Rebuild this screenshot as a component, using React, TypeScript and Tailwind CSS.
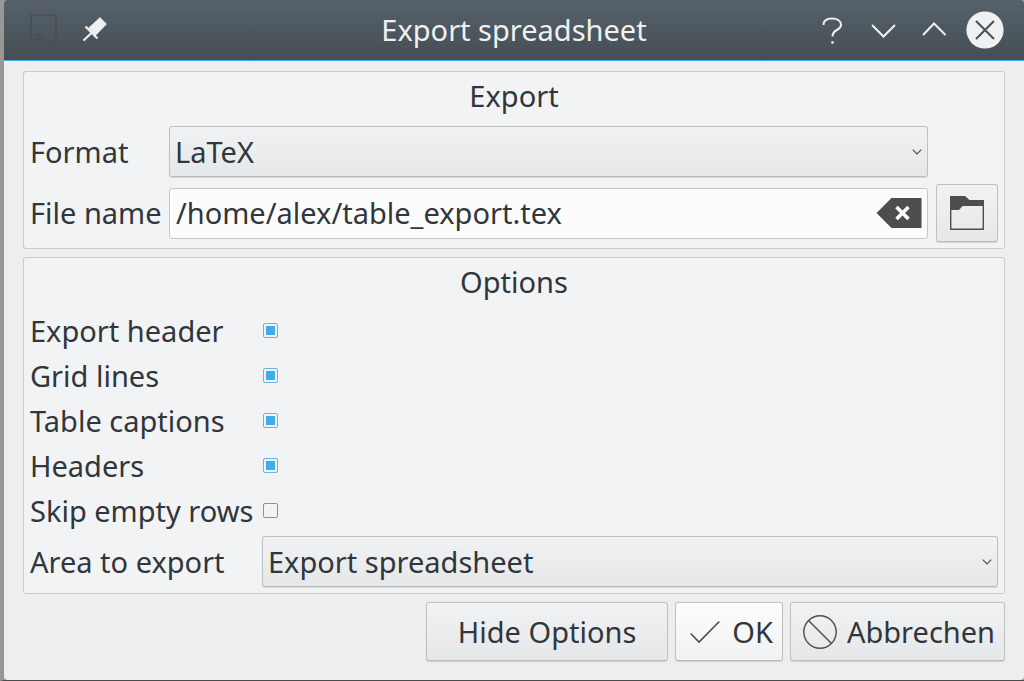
import type { ReactNode } from 'react'

const options = [
  { id: 'export-header', label: 'Export header', checked: true },
  { id: 'grid-lines', label: 'Grid lines', checked: true },
  { id: 'table-captions', label: 'Table captions', checked: true },
  { id: 'headers', label: 'Headers', checked: true },
  { id: 'skip-empty-rows', label: 'Skip empty rows', checked: false },
]

const raised = 'rounded-[3px] border border-[#bfc1c2] border-b-[#b8babb] shadow-[0_1px_1px_rgba(0,0,0,0.12)]'
const face = 'bg-linear-to-b from-[#f1f2f3] to-[#e6e7e8]'

function TitleButton({ label, children }: { label: string; children: ReactNode }) {
  return (
    <button type="button" aria-label={label} className="size-[38px]">
      <svg viewBox="0 0 38 38" className="size-[38px]" fill="none" stroke="#eff0f1" strokeWidth="2">
        {children}
      </svg>
    </button>
  )
}

function ComboBox({ id, values }: { id: string; values: string[] }) {
  return (
    <div className="relative">
      <select id={id} className={`h-[51px] w-full appearance-none pl-[5px] pr-8 ${raised} ${face}`}>
        {values.map((value) => (
          <option key={value}>{value}</option>
        ))}
      </select>
      <svg
        viewBox="0 0 10 6"
        className="pointer-events-none absolute right-1.5 top-[23px] h-1.5 w-2.5"
        fill="none"
        stroke="#4d4d4d"
        strokeWidth="1.2"
      >
        <path d="M0.7 0.7 L5 5 L9.3 0.7" />
      </svg>
    </div>
  )
}

function Panel({ title, children }: { title: string; children: ReactNode }) {
  return (
    <section className="rounded-[3px] border border-[#c9cbcc] bg-[#f2f3f5] px-1.5 pb-1.5">
      <h2 className="mb-0.5 flex h-12 items-center justify-center">{title}</h2>
      {children}
    </section>
  )
}

export default function App() {
  return (
    <div className="min-h-screen border-b border-l-4 border-b-[#4a4a4a] border-l-[#999795] bg-[#999795] font-['Noto_Sans',sans-serif] text-[29px] leading-10 text-[#31363b]">
      {/* Title bar */}
      <header className="grid h-[61px] grid-cols-[1fr_auto_1fr] items-center rounded-t-[4px] border-b border-[#3daee9] bg-linear-to-b from-[#56616a] to-[#454e54] px-5 text-[#eff0f1]">
        <div className="flex gap-[13px]">
          <TitleButton label="Window menu">
            <path d="M7 27V4H32V33.5H21" stroke="#4d4e50" strokeWidth="1.6" />
            <path d="M7 28H18M12.5 22.5L18 28L12.5 33.5" stroke="#4d4e50" />
          </TitleButton>
          <TitleButton label="Keep above">
            <path d="M25 6.5L31.5 13L20.5 24.5L13.5 17Z" fill="#eff0f1" stroke="#eff0f1" strokeWidth="0.6" />
            <path d="M10.5 15.5L22.5 27.5M17 21.5L8.5 29.5" strokeWidth="2.2" />
          </TitleButton>
        </div>
        <h1>Export spreadsheet</h1>
        <div className="flex justify-end gap-[13px]">
          <TitleButton label="Help">
            <path d="M10.5 14C10.5 9.5 14 7.5 19 7.5C24.5 7.5 28 10 28 14C28 20 19.5 17.5 19.5 25.5" />
            <path d="M18.3 31.5H20.7" strokeWidth="2.4" />
          </TitleButton>
          <TitleButton label="Minimize">
            <path d="M8 14L19.5 25.5L31 14" />
          </TitleButton>
          <TitleButton label="Maximize">
            <path d="M8 24L19 12.5L30.5 24" />
          </TitleButton>
          <TitleButton label="Close">
            <circle cx="19" cy="19" r="18.6" fill="#eff0f1" stroke="none" />
            <path d="M10 10L28 28M28 10L10 28" stroke="#475057" />
          </TitleButton>
        </div>
      </header>

      <main className="flex flex-col gap-2 rounded-b-[4px] bg-[#edeef0] px-[19px] pb-[19px] pt-2.5">
        <Panel title="Export">
          <div className="mt-1.5 grid grid-cols-[131px_1fr_62px] items-center gap-x-2 gap-y-[7px]">
            <label htmlFor="format">Format</label>
            <ComboBox id="format" values={['LaTeX', 'FITS', 'ASCII']} />
            <span />
            <label htmlFor="file-name" className="whitespace-nowrap">File name</label>
            <div className="flex h-[51px] items-center rounded-[3px] border border-[#c4c6c7] bg-[#fcfcfc] pl-1.5 pr-[5px]">
              <input
                id="file-name"
                type="text"
                defaultValue="/home/alex/table_export.tex"
                className="min-w-0 flex-1 outline-none"
              />
              <button type="button" aria-label="Clear file name">
                <svg viewBox="0 0 46 30" className="h-[30px] w-[46px]">
                  <path d="M0.5 15L15.5 0H45.5V30H15.5Z" fill="#4d4d4d" />
                  <path d="M20.5 9L32.5 21M32.5 9L20.5 21" stroke="#fcfcfc" strokeWidth="3.6" />
                </svg>
              </button>
            </div>
            <button
              type="button"
              aria-label="Choose file"
              className={`flex h-[58px] items-center justify-center ${raised} ${face}`}
            >
              <svg viewBox="0 0 34 34" className="size-[34px]">
                <path d="M0 0H15L19.5 4H34V10H12.5L9 14H0Z" fill="#4d4d4d" />
                <path d="M0.7 13V33.3H33.3V9" fill="none" stroke="#4d4d4d" strokeWidth="1.4" />
              </svg>
            </button>
          </div>
        </Panel>

        <Panel title="Options">
          {options.map((option) => (
            <div key={option.id} className="grid h-[45px] grid-cols-[225px_1fr] items-center gap-2">
              <label htmlFor={option.id} className="whitespace-nowrap">{option.label}</label>
              <input
                id={option.id}
                type="checkbox"
                defaultChecked={option.checked}
                className="size-[15px] appearance-none rounded-[2px] border border-[#8e9193] bg-clip-content p-[2px] checked:border-[#5cb8ea] checked:bg-[#3daee9]"
              />
            </div>
          ))}
          <div className="mt-[3px] grid grid-cols-[224px_1fr] items-center gap-2">
            <label htmlFor="area">Area to export</label>
            <ComboBox id="area" values={['Export spreadsheet', 'Export selection']} />
          </div>
        </Panel>

        {/* Dialog buttons */}
        <footer className="flex justify-end gap-[7px]">
          <button type="button" className={`h-[59px] px-[31px] ${raised} ${face}`}>
            Hide Options
          </button>
          <button
            type="button"
            className={`flex h-[59px] items-center gap-3 pl-3.5 pr-[9px] ${raised} bg-linear-to-b from-[#fcfcfc] to-[#f1f2f3]`}
          >
            <svg viewBox="0 0 30 24" className="h-6 w-[30px]" fill="none" stroke="#4d4d4d" strokeWidth="1.6">
              <path d="M0.7 13.5L9 22L29.3 1.5" />
            </svg>
            OK
          </button>
          <button type="button" className={`flex h-[59px] items-center gap-2.5 pl-3 pr-[9px] ${raised} ${face}`}>
            <svg viewBox="0 0 34 34" className="size-[34px]" fill="none" stroke="#4d4d4d" strokeWidth="1.4">
              <circle cx="17" cy="17" r="16.2" />
              <path d="M5.5 5.5L28.5 28.5" />
            </svg>
            Abbrechen
          </button>
        </footer>
      </main>
    </div>
  )
}
